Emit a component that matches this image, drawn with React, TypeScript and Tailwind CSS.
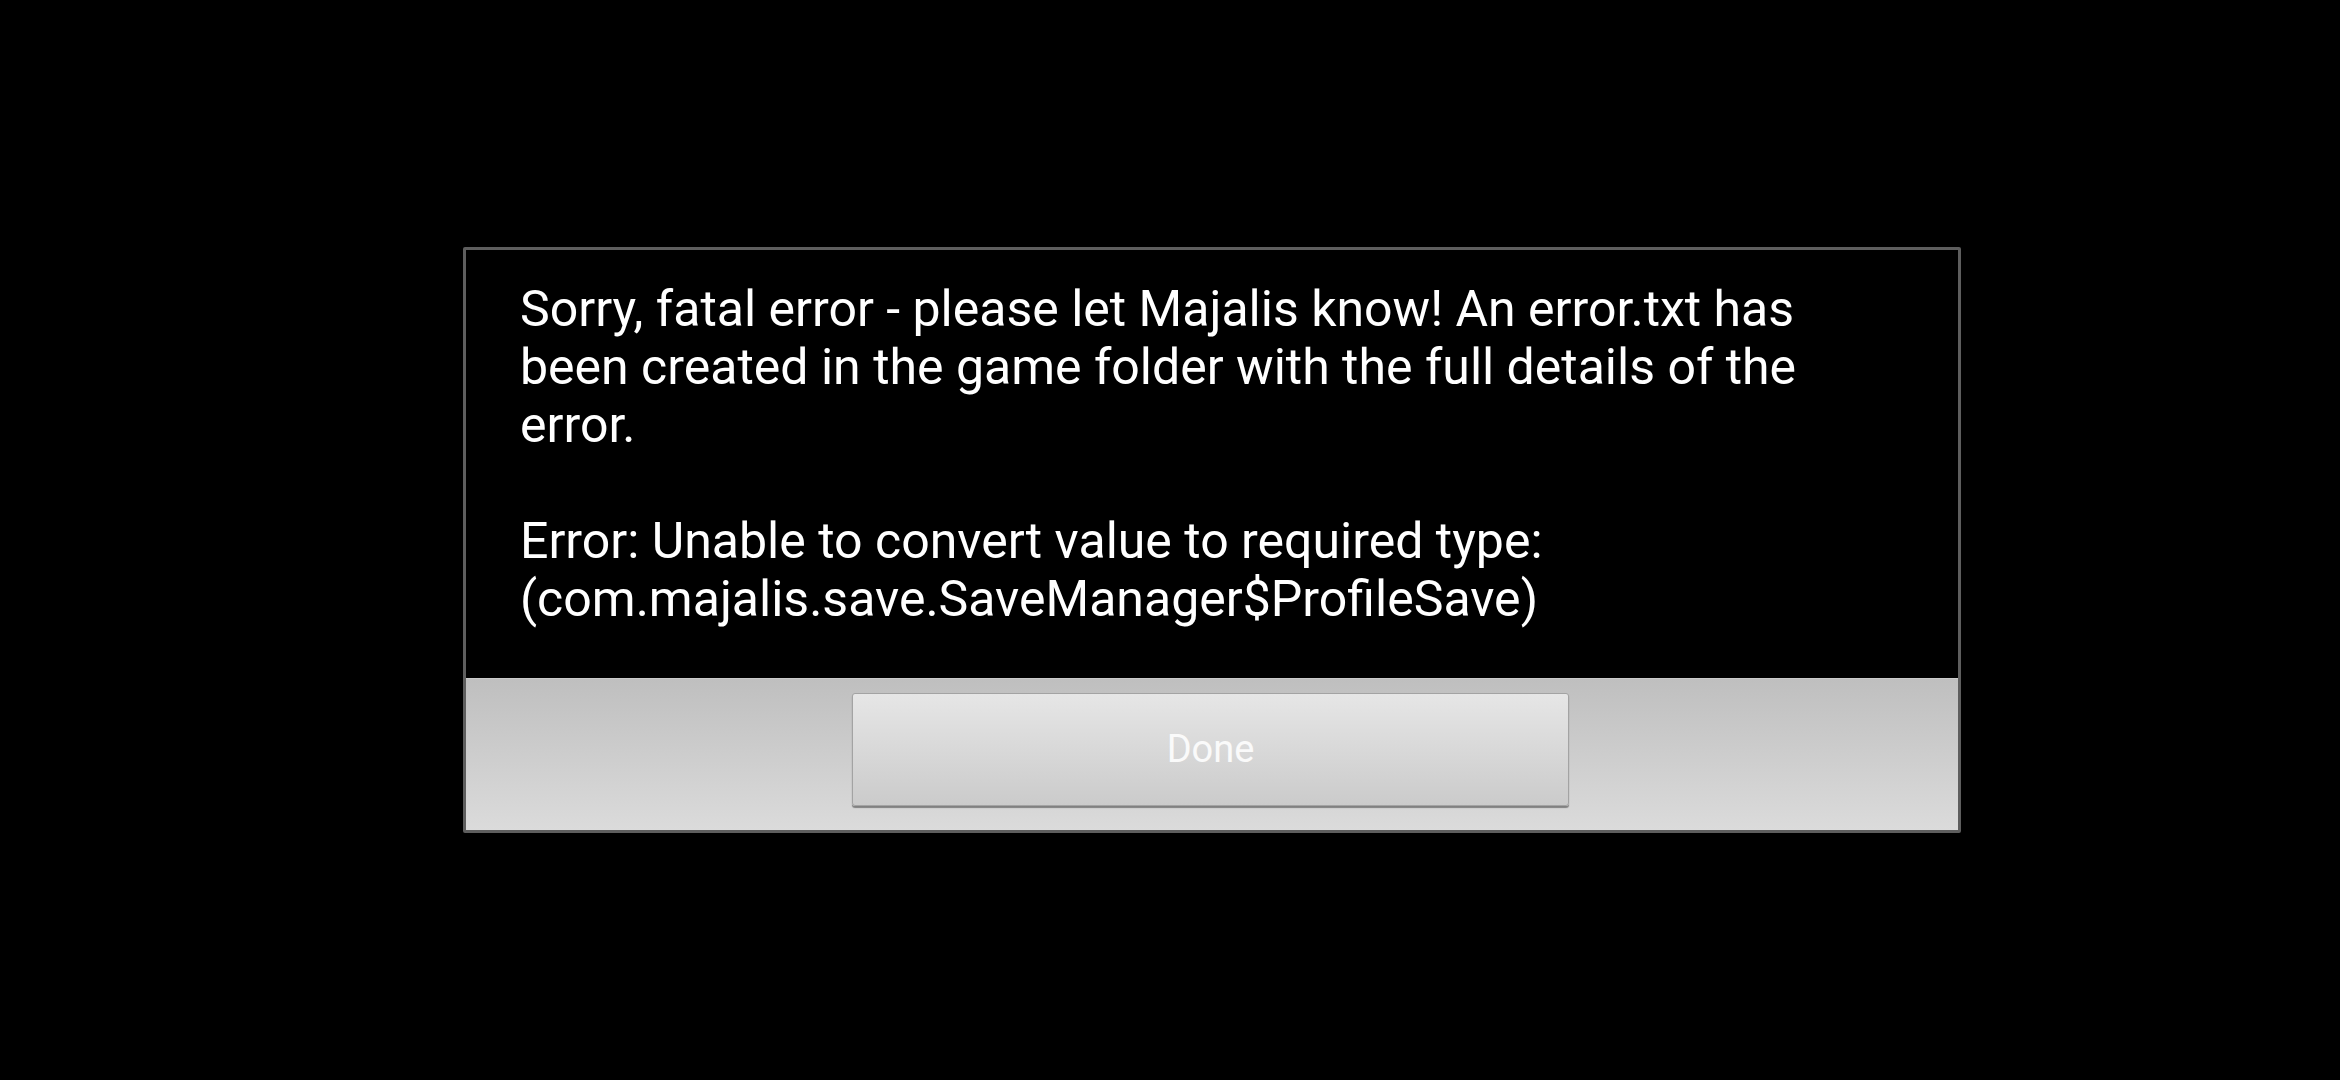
import React from "react";

export default function App() {
  return (
    <div className="w-full min-h-screen h-[1080px] bg-black flex items-center justify-center pl-[84px]">
      <div className="w-[1498px] h-[586px] border-[3px] border-[#5e5e5e] rounded-[2px] flex flex-col overflow-hidden">
        <div
          className="h-[428px] shrink-0 bg-black pl-[54px] pt-[30px] text-white text-[50px] leading-[58px]"
          style={{ fontFamily: "Roboto, 'Noto Sans', sans-serif" }}
        >
          <div className="whitespace-nowrap">Sorry, fatal error - please let Majalis know! An error.txt has</div>
          <div className="whitespace-nowrap">been created in the game folder with the full details of the</div>
          <div className="whitespace-nowrap">error.</div>
          <div className="h-[58px]" />
          <div className="whitespace-nowrap">Error: Unable to convert value to required type:</div>
          <div className="whitespace-nowrap">(com.majalis.save.SaveManager$ProfileSave)</div>
        </div>
        <div className="flex-1 border-t border-[#cbcbcb] bg-gradient-to-b from-[#bfbfbf] to-[#dbdbdb] flex justify-center pt-[14px] pr-[3px]">
          <button
            className="w-[717px] h-[113px] rounded-[3px] border border-[#a3a3a3] bg-gradient-to-b from-[#e6e6e6] to-[#cbcbcb] shadow-[0_2px_1px_rgba(0,0,0,0.4)] text-[#fafafa] text-[38px] flex items-center justify-center"
            style={{ fontFamily: "Roboto, 'Noto Sans', sans-serif" }}
          >
            Done
          </button>
        </div>
      </div>
    </div>
  );
}
